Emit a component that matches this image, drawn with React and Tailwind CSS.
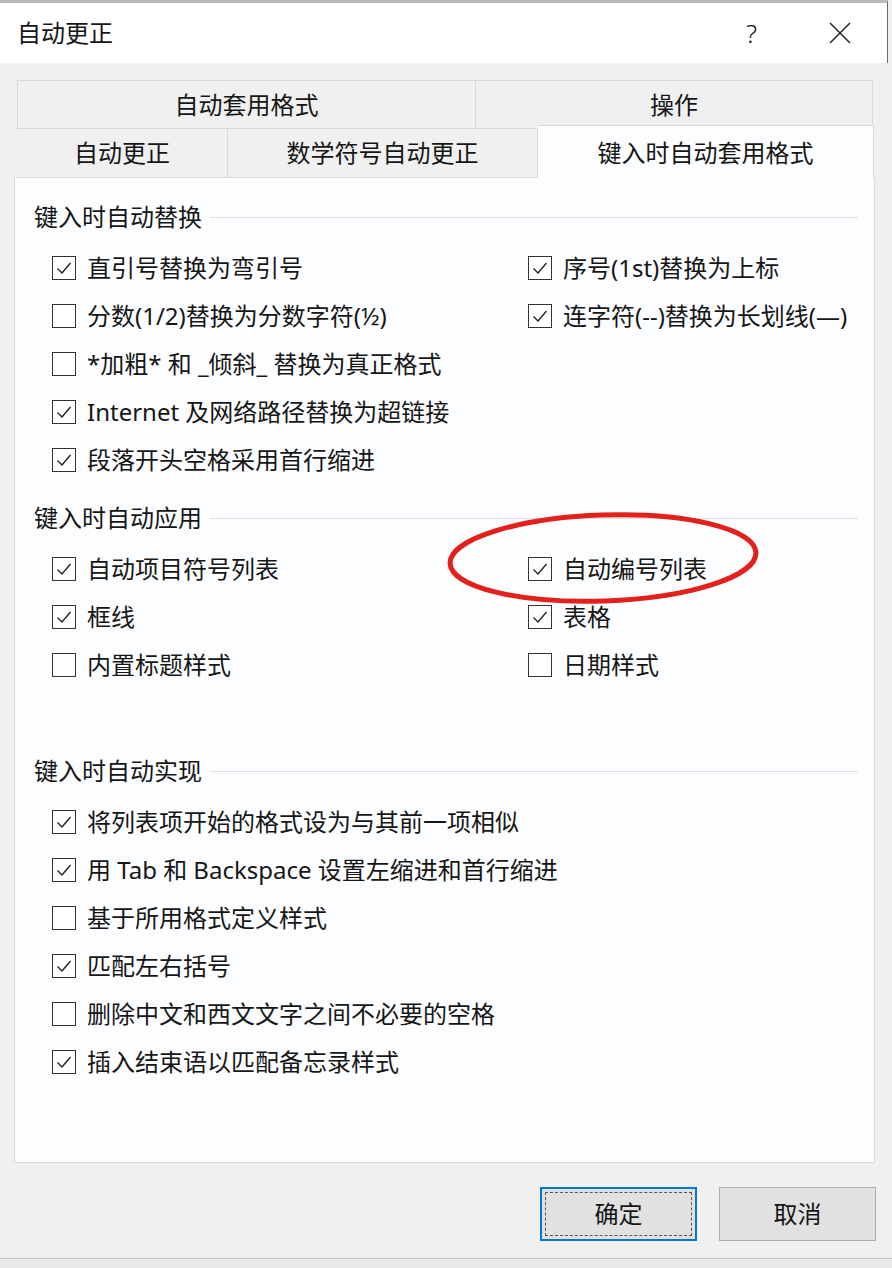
import React from "react";

const font = { fontFamily: '"Noto Sans", "Noto Sans CJK SC", sans-serif' };

const Check = ({ on }) => (
  <div className="w-[24px] h-[24px] shrink-0 border-[1.5px] border-[#333] bg-white flex items-center justify-center">
    {on && (
      <svg width="20" height="20" viewBox="0 0 20 20" fill="none">
        <path d="M3.5 10.5 L8 15 L16.5 5" stroke="#222" strokeWidth="1.4" />
      </svg>
    )}
  </div>
);

const Option = ({ on, label }) => (
  <div className="h-[48px] flex items-center gap-[11px]">
    <Check on={on} />
    <span className="whitespace-nowrap">{label}</span>
  </div>
);

const Heading = ({ title, className = "" }) => (
  <div className={"h-[32px] flex items-center pl-[19px] pr-[16px] " + className}>
    <span className="whitespace-nowrap">{title}</span>
    <div className="flex-1 h-px bg-[#dcdfe3] ml-[8px]" />
  </div>
);

export default function App() {
  return (
    <div className="w-[892px] h-[1268px] bg-[#f0f0f0] text-[24px] text-[#161616] relative overflow-hidden" style={font}>
      {/* title bar */}
      <div className="h-[63px] w-[888px] bg-white border-t-[3px] border-[#b9b9b9] border-r border-r-[#6b6b6b] flex items-center pl-[17px] pr-[36px]">
        <span className="flex-1">自动更正</span>
        <span className="text-[26px] font-light mr-[72px]">?</span>
        <svg width="22" height="22" viewBox="0 0 22 22">
          <path d="M1 1 L21 21 M21 1 L1 21" stroke="#222" strokeWidth="1.5" />
        </svg>
      </div>

      <div className="pl-[14px] w-[875px]">
        {/* tab row 1 */}
        <div className="flex mt-[17px] ml-[3px] h-[48px]">
          <div className="w-[459px] border-t border-l border-r border-[#d9d9d9] flex items-center justify-center">自动套用格式</div>
          <div className="w-[397px] border-t border-r border-[#d9d9d9] flex items-center justify-center">操作</div>
        </div>
        {/* tab row 2 */}
        <div className="flex items-end h-[49px] ml-[3px] border-t border-[#d9d9d9]">
          <div className="w-[211px] h-[49px] flex items-center justify-center border-r border-[#d9d9d9]">自动更正</div>
          <div className="w-[310px] h-[49px] flex items-center justify-center border-r border-[#d9d9d9]">数学符号自动更正</div>
          <div className="w-[336px] h-[53px] -mb-px relative z-10 bg-[#fcfdfe] border-t border-r border-[#d9d9d9] flex items-center justify-center pt-[2px]">键入时自动套用格式</div>
        </div>
        {/* panel */}
        <div className="h-[986px] bg-[#fcfdfe] border border-[#d9d9d9] pt-[23px] relative">
          <Heading title="键入时自动替换" />
          <div className="flex pl-[37px] mt-[11px]">
            <div className="w-[476px]">
              <Option on label="直引号替换为弯引号" />
              <Option label="分数(1/2)替换为分数字符(½)" />
              <Option label="*加粗* 和 _倾斜_ 替换为真正格式" />
              <Option on label="Internet 及网络路径替换为超链接" />
              <Option on label="段落开头空格采用首行缩进" />
            </div>
            <div>
              <Option on label="序号(1st)替换为上标" />
              <Option on label="连字符(--)替换为长划线(—)" />
            </div>
          </div>

          <Heading title="键入时自动应用" className="mt-[18px]" />
          <div className="flex pl-[37px] mt-[11px]">
            <div className="w-[476px]">
              <Option on label="自动项目符号列表" />
              <Option on label="框线" />
              <Option label="内置标题样式" />
            </div>
            <div>
              <Option on label="自动编号列表" />
              <Option on label="表格" />
              <Option label="日期样式" />
            </div>
          </div>

          <Heading title="键入时自动实现" className="mt-[66px]" />
          <div className="pl-[37px] mt-[11px]">
            <Option on label="将列表项开始的格式设为与其前一项相似" />
            <Option on label="用 Tab 和 Backspace 设置左缩进和首行缩进" />
            <Option label="基于所用格式定义样式" />
            <Option on label="匹配左右括号" />
            <Option label="删除中文和西文文字之间不必要的空格" />
            <Option on label="插入结束语以匹配备忘录样式" />
          </div>

          {/* red annotation ellipse */}
          <svg className="absolute left-[428px] top-[330px] pointer-events-none" width="320" height="100" viewBox="0 0 320 100">
            <ellipse cx="160" cy="50" rx="153" ry="43" fill="none" stroke="#e3201b" strokeWidth="5" transform="rotate(-2 160 50)" />
          </svg>
        </div>
      </div>

      {/* buttons */}
      <div className="flex justify-end gap-[22px] pr-[16px] mt-[24px]">
        <button className="w-[157px] h-[54px] bg-[#e1e1e1] border-2 border-[#0078d7] p-[3px]">
          <div className="w-full h-full border border-dashed border-[#555] flex items-center justify-center">确定</div>
        </button>
        <button className="w-[157px] h-[54px] bg-[#e1e1e1] border border-[#adadad] flex items-center justify-center">取消</button>
      </div>

      <div className="absolute left-0 right-0 top-[1258px] h-[10px] border-t border-[#c8c8c8] bg-[#e9e9e9]" />
    </div>
  );
}
